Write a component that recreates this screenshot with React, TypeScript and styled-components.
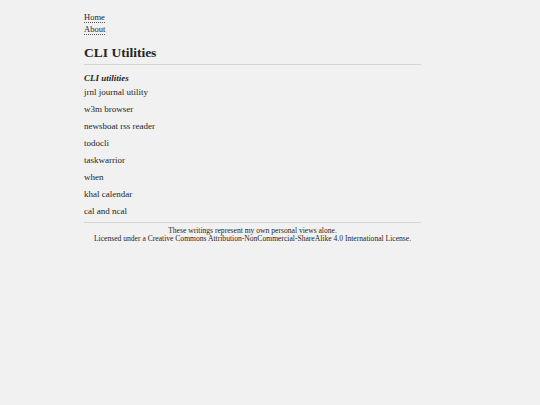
import React from "react";
import styled, { createGlobalStyle } from "styled-components";

const GlobalStyle = createGlobalStyle`
    html, body {
        margin: 0;
        padding: 0;
        background: #f1f1f1;
    }
    body {
        font-family: "Liberation Serif", "Times New Roman", serif;
        color: #262626;
    }
`;

const Page = styled.div`
    width: 337px;
    margin-left: 84px;
    padding-top: 13px;
`;

const Nav = styled.nav`
    display: flex;
    flex-direction: column;
    align-items: flex-start;
    font-size: 8.5px;
    line-height: 11px;
`;

const NavLink = styled.a`
    color: #262626;
    text-decoration: none;
    border-bottom: 1px dotted #555;
    line-height: 9px;
    margin-bottom: 2px;
`;

const Title = styled.h1`
    margin: 8px 0 0;
    padding-bottom: 3px;
    font-size: 13.5px;
    line-height: 16px;
    font-weight: bold;
    border-bottom: 1px solid #d4d4d4;
`;

const Section = styled.h3`
    margin: 7px 0 2px;
    font-size: 9px;
    line-height: 12px;
    font-style: italic;
    font-weight: bold;
`;

const Item = styled.p`
    margin: 0 0 5px;
    font-size: 9px;
    line-height: 12px;
`;

const Footer = styled.footer`
    margin-top: 1px;
    padding-top: 4px;
    border-top: 1px solid #d4d4d4;
    text-align: center;
    font-size: 7.6px;
    line-height: 8px;
`;

const FooterLink = styled.a`
    color: #262626;
    text-decoration: none;
    border-bottom: 1px dotted #555;
`;

const tools = [
    "jrnl journal utility",
    "w3m browser",
    "newsboat rss reader",
    "todocli",
    "taskwarrior",
    "when",
    "khal calendar",
    "cal and ncal",
];

export default function App() {
    return (
        <>
            <GlobalStyle />
            <Page>
                <Nav>
                    <NavLink href="#">Home</NavLink>
                    <NavLink href="#">About</NavLink>
                </Nav>
                <Title>CLI Utilities</Title>
                <Section>CLI utilities</Section>
                {tools.map((t) => (
                    <Item key={t}>{t}</Item>
                ))}
                <Footer>
                    These writings represent my own personal views alone.
                    <br />
                    Licensed under a{" "}
                    <FooterLink href="#">
                        Creative Commons Attribution-NonCommercial-ShareAlike 4.0 International License
                    </FooterLink>
                    .
                </Footer>
            </Page>
        </>
    );
}
